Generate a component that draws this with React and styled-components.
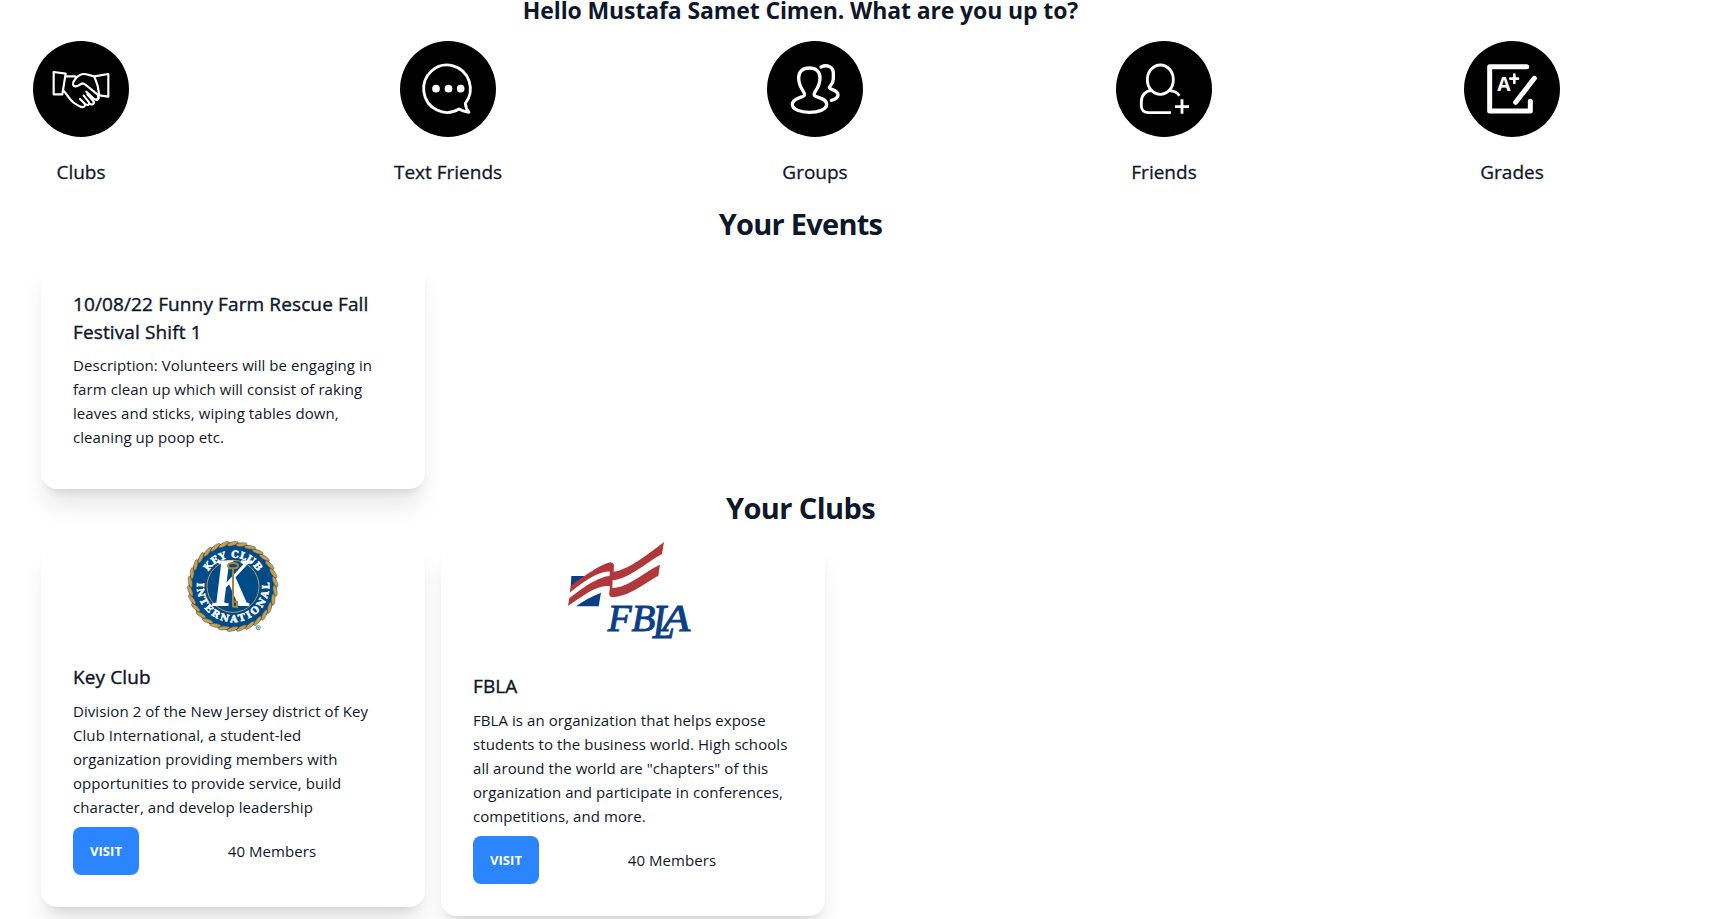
import React from 'react';
import styled, { createGlobalStyle } from 'styled-components';

const GlobalStyle = createGlobalStyle`
  *, *::before, *::after { box-sizing: border-box; }
  html, body { margin: 0; height: 100%; overflow: hidden; }
  body {
    background: #fff;
    color: #0f172a;
    font: 400 15px/24px "Open Sans", "Noto Sans", sans-serif;
    letter-spacing: 0.07px;
  }
  h1, h2, h3, p { margin: 0; }
`;

const Page = styled.main`
  width: 1601px;
  height: 919px;
  overflow: hidden;
`;

const Greeting = styled.h1`
  font-size: 23px;
  line-height: 20px;
  font-weight: 700;
  letter-spacing: -0.12px;
  text-align: center;
`;

const Nav = styled.nav`
  display: grid;
  grid-template-columns: 367px 367px 349px 348px 160px;
  margin-top: 21px;
  padding-left: 1px;
`;

const NavItem = styled.div`
  display: flex;
  flex-direction: column;
  align-items: center;
  gap: 21px;
  width: 160px;
`;

const IconBadge = styled.svg`
  display: block;
  width: 96px;
  height: 96px;
  border-radius: 50%;
  background: #000;
  fill: none;
  stroke: #fff;
  stroke-width: ${(p) => p.$weight}px;
  stroke-linecap: round;
  stroke-linejoin: round;
`;

const NavLabel = styled.span`
  font-size: 19px;
  line-height: 28px;
  letter-spacing: 0;
  -webkit-text-stroke: 0.3px currentColor;
`;

const Section = styled.section`
  margin-top: ${(p) => p.$gap}px;
`;

const SectionTitle = styled.h2`
  font-size: 29px;
  line-height: 36px;
  font-weight: 700;
  letter-spacing: ${(p) => p.$tracking}px;
  text-align: center;
`;

const Cards = styled.div`
  display: flex;
  align-items: flex-start;
  gap: 16px;
  padding: ${(p) => p.$top}px 0 0 41px;
`;

const Card = styled.article`
  width: 384px;
  border-radius: 16px;
  background: #fff;
  box-shadow: 0 20px 25px -5px rgba(0, 0, 0, 0.1), 0 8px 10px -6px rgba(0, 0, 0, 0.1);
`;

const Figure = styled.figure`
  display: flex;
  justify-content: center;
  margin: 0;
`;

const CardBody = styled.div`
  display: flex;
  flex-direction: column;
  gap: ${(p) => (p.$tail ? '7px' : '8px')};
  padding: ${(p) => (p.$tail ? '32px 32px 40px' : '32px')};
`;

const CardTitle = styled.h3`
  font-size: 19px;
  line-height: 28px;
  font-weight: 400;
  letter-spacing: 0.12px;
  -webkit-text-stroke: 0.4px currentColor;
`;

const Line = styled.span`
  display: block;
  white-space: nowrap;
`;

const Actions = styled.div`
  display: flex;
  align-items: center;
`;

const VisitButton = styled.button`
  width: 66px;
  height: 48px;
  padding: 0;
  border: 0;
  border-radius: 8px;
  background: #2a85ff;
  color: #fff;
  font: 700 13px/14px "Open Sans", "Noto Sans", sans-serif;
  letter-spacing: 0.1px;
`;

const Members = styled.p`
  flex: 1;
  padding-left: 12px;
  text-align: center;
`;

const KeyLogo = styled.svg`
  display: block;
  width: 92px;
  height: 90px;
  overflow: visible;
`;

const FblaLogo = styled.svg`
  display: block;
  width: 150px;
  height: 99px;
  overflow: visible;
`;

const icons = {
  clubs: {
    weight: 6.5,
    art: (
      <>
        <path d="M62 93 98 98 88 160H62ZM226 99V167L199 163C197 142 191 122 184 106Z" />
        <path d="M98 106H127M184 106C171 104 161 98 150 99C136 101 129 110 123 120C118 127 119 135 127 136C137 137 140 129 149 127C153 127 157 131 161 134L193 160C199 166 198 174 192 176C186 178 181 172 177 168L160 152" />
        <path d="M90 148C103 159 108 174 121 184C132 192 143 200 151 198C158 196 157 190 151 184L141 174M153 186C161 196 171 192 168 184L152 164M169 187C178 195 186 187 181 180L163 160M190 176C196 176 198 171 195 163" />
      </>
    ),
  },
  text: {
    weight: 8.5,
    art: (
      <>
        <path d="M196 187A70 71 0 1 0 177 204Q187 210 207 214Q197 202 196 187Z" />
        <g fill="#fff" stroke="none">
          <circle cx="108" cy="143" r="11.5" />
          <circle cx="145.500" cy="143" r="11.5" />
          <circle cx="182" cy="143" r="11.5" />
        </g>
      </>
    ),
  },
  groups: {
    weight: 10,
    art: (
      <>
        <path d="M112 163C117 153 95 144 95 110C95 91 108 81 127 81C146 81 159 91 159 110C159 144 137 153 142 163C146 170 179 170 179 190C179 206 153 214 127 214C101 214 76 206 76 190C76 170 108 170 112 163Z" />
        <path d="M162 78C178 70 199 75 199 97V113C199 129 188 134 187 140C189 147 213 146 213 162C213 171 205 175 193 178" />
      </>
    ),
  },
  friends: {
    weight: 8.5,
    art: (
      <>
        <ellipse cx="133" cy="116" rx="39" ry="44" />
        <path strokeLinecap="butt" d="M190 164C184 154 174 150 161 149M105 149C88 150 76 164 76 182V196C76 208 85 215 97 215H165M177 197H219M198 175V218" />
      </>
    ),
  },
  grades: {
    weight: 15,
    art: (
      <>
        <path d="M188 77H77V210H199V181M211 112L155 184" />
        <path strokeWidth="8" d="M139 113H162M151 101V126" />
        <text x="120" y="149" textAnchor="middle" fontFamily="Open Sans, sans-serif" fontWeight="700" fontSize="58" fill="#fff" stroke="none">A</text>
      </>
    ),
  },
};

const links = [
  ['Clubs', 'clubs'],
  ['Text Friends', 'text'],
  ['Groups', 'groups'],
  ['Friends', 'friends'],
  ['Grades', 'grades'],
];

const ropeStrands = Array.from({ length: 30 }, (_, i) => i * 12);

function KeyClubLogo() {
  return (
    <KeyLogo viewBox="51 33 276 270" aria-label="Key Club International">
      <defs>
        <path id="ringTop" d="M103 169A86 86 0 0 1 275 169" />
        <path id="ringBottom" d="M82 150A108.500 108.500 0 1 0 296 150" />
      </defs>
      <circle cx="188" cy="169" r="132" fill="#004b87" />
      <g fill="#c79f4b" stroke="#4d5460" strokeWidth="1.500">
        {ropeStrands.map((a) => (
          <ellipse key={a} cx="188" cy="41" rx="17" ry="5.500" transform={`rotate(${a} 188 169) rotate(-17 188 41)`} />
        ))}
      </g>
      <circle cx="189" cy="169" r="78" fill="#004b87" stroke="#b99a55" strokeWidth="3" />
      <text x="190" y="228" textAnchor="middle" fontFamily="Liberation Serif, serif" fontWeight="700" fontSize="208" fill="#fff" textLength="116" lengthAdjust="spacingAndGlyphs" transform="translate(19 0) skewX(-7)">K</text>
      <g fill="none" stroke="#a98538" strokeWidth="6">
        <ellipse cx="189" cy="107" rx="15" ry="8" />
        <path d="M189 115V232M191 215H201V230H191" />
      </g>
      <g fill="#fff" stroke="#fff" strokeWidth="1.500" fontFamily="DejaVu Serif, serif" fontWeight="700" fontSize="29">
        <text textAnchor="middle"><textPath href="#ringTop" startOffset="50%" textLength="178">KEY CLUB</textPath></text>
        <text textAnchor="middle"><textPath href="#ringBottom" startOffset="50%" textLength="362">INTERNATIONAL</textPath></text>
      </g>
      <circle cx="265" cy="293" r="6" fill="none" stroke="#4f7eab" strokeWidth="3" />
      <circle cx="265" cy="293" r="2.500" fill="#4f7eab" />
    </KeyLogo>
  );
}

function FblaMark() {
  return (
    <FblaLogo viewBox="24 33 450 297" aria-label="FBLA">
      <path fill="#0b3f86" d="M64 138H108L62 171ZM78 229Q108 206 153 188L146 229Z" />
      <path fill="#b0383b" d="M59 188L62 168C94 143 135 115 165 102Q188 90 192 104L191 125C235 120 295 72 342 36L336 72C288 98 235 148 187 151C176 151 178 137 180 125C147 121 100 156 59 188Z" />
      <path fill="#b0383b" d="M54 228L58 204C95 176 125 154 156 143Q185 132 188 146L187 174C235 173 282 126 330 104L325 137C283 160 235 202 183 201C174 197 179 183 180 169C140 163 96 201 54 228Z" />
      <g fill="#0b3f86" stroke="#0b3f86" strokeWidth="3" fontFamily="Liberation Serif, serif" fontStyle="italic" fontWeight="400" fontSize="112">
        <text x="173" y="304" textLength="143" lengthAdjust="spacingAndGlyphs">FB</text>
        <text x="308" y="325" fontSize="143" textLength="66" lengthAdjust="spacingAndGlyphs">L</text>
        <text x="337" y="304" textLength="84" lengthAdjust="spacingAndGlyphs">A</text>
      </g>
    </FblaLogo>
  );
}

const clubs = [
  {
    name: 'Key Club',
    logo: <KeyClubLogo />,
    lines: [
      'Division 2 of the New Jersey district of Key',
      'Club International, a student-led',
      'organization providing members with',
      'opportunities to provide service, build',
      'character, and develop leadership',
    ],
  },
  {
    name: 'FBLA',
    logo: <FblaMark />,
    lines: [
      'FBLA is an organization that helps expose',
      'students to the business world. High schools',
      'all around the world are "chapters" of this',
      'organization and participate in conferences,',
      'competitions, and more.',
    ],
  },
];

const eventLines = [
  'Description: Volunteers will be engaging in',
  'farm clean up which will consist of raking',
  'leaves and sticks, wiping tables down,',
  'cleaning up poop etc.',
];

const Lines = ({ items }) => items.map((t) => <Line key={t}>{t}</Line>);

export default function App() {
  return (
    <>
      <GlobalStyle />
      <Page>
        <Greeting>Hello Mustafa Samet Cimen. What are you up to?</Greeting>
        <Nav>
          {links.map(([label, icon]) => (
            <NavItem key={icon}>
              <IconBadge viewBox="0 0 288 288" $weight={icons[icon].weight}>{icons[icon].art}</IconBadge>
              <NavLabel>{label}</NavLabel>
            </NavItem>
          ))}
        </Nav>
        <Section $gap={20}>
          <SectionTitle $tracking={-0.75}>Your Events</SectionTitle>
          <Cards $top={16}>
            <Card>
              <CardBody $tail>
                <CardTitle>
                  <Lines items={['10/08/22 Funny Farm Rescue Fall', 'Festival Shift 1']} />
                </CardTitle>
                <p><Lines items={eventLines} /></p>
              </CardBody>
            </Card>
          </Cards>
        </Section>
        <Section $gap={1}>
          <SectionTitle $tracking={-0.6}>Your Clubs</SectionTitle>
          <Cards $top={15}>
            {clubs.map((club) => (
              <Card key={club.name}>
                <Figure>{club.logo}</Figure>
                <CardBody>
                  <CardTitle>{club.name}</CardTitle>
                  <p><Lines items={club.lines} /></p>
                  <Actions>
                    <VisitButton>VISIT</VisitButton>
                    <Members>40 Members</Members>
                  </Actions>
                </CardBody>
              </Card>
            ))}
          </Cards>
        </Section>
      </Page>
    </>
  );
}
